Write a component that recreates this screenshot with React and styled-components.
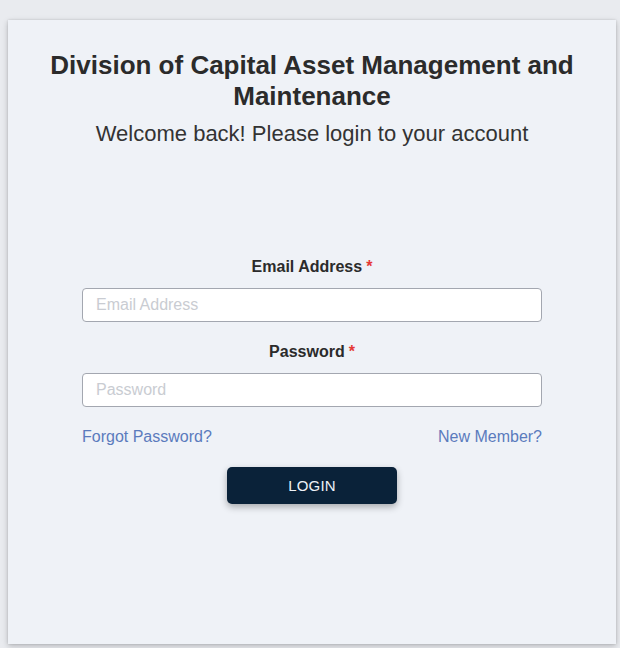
import React from "react";
import styled, { createGlobalStyle } from "styled-components";

const Global = createGlobalStyle`
  html, body { margin: 0; padding: 0; }
  body {
    background: #e9ebef;
    font-family: "Liberation Sans", Arial, sans-serif;
  }
  * { box-sizing: border-box; }
`;

const Page = styled.div`
  padding: 20px 4px 4px 8px;
  min-height: 648px;
`;

const Card = styled.div`
  width: 608px;
  height: 624px;
  background: #eff2f7;
  box-shadow: 0 2px 6px rgba(0, 0, 0, 0.22), 0 0 2px rgba(0, 0, 0, 0.12);
  padding: 30px 20px 0;
  display: flex;
  flex-direction: column;
  align-items: center;
`;

const Title = styled.h1`
  margin: 0;
  font-size: 26px;
  line-height: 31px;
  font-weight: 700;
  color: #2b2b2b;
  text-align: center;
`;

const Subtitle = styled.p`
  margin: 9px 0 0;
  font-size: 22px;
  line-height: 25px;
  color: #333;
  text-align: center;
`;

const Form = styled.form`
  width: 460px;
  margin-top: 112px;
  display: flex;
  flex-direction: column;
  align-items: stretch;
`;

const Label = styled.label`
  display: block;
  text-align: center;
  font-size: 16px;
  line-height: 18px;
  font-weight: 700;
  color: #2b2b2b;
  margin-top: ${(p) => (p.$first ? "0" : "21px")};
  margin-bottom: 12px;
`;

const Required = styled.span`
  color: #e53935;
  margin-left: 4px;
`;

const Input = styled.input`
  width: 100%;
  height: 34px;
  border: 1.5px solid #a3a7b0;
  border-radius: 4px;
  background: #fff;
  padding: 0 13px;
  font-family: "Liberation Sans", Arial, sans-serif;
  font-size: 16px;
  color: #333;
  outline: none;
  &::placeholder { color: #c9ccd2; }
`;

const Links = styled.div`
  display: flex;
  justify-content: space-between;
  margin-top: 21px;
  line-height: 18px;
`;

const LinkText = styled.a`
  font-size: 16px;
  color: #5b7bbd;
  text-decoration: none;
  cursor: pointer;
`;

const Button = styled.button`
  align-self: center;
  margin-top: 21px;
  width: 170px;
  height: 37px;
  border: none;
  border-radius: 5px;
  background: #0a2239;
  color: #eef2f7;
  font-family: "Liberation Sans", Arial, sans-serif;
  font-size: 15px;
  letter-spacing: 0.2px;
  box-shadow: 0 3px 7px rgba(0, 0, 0, 0.3);
  cursor: pointer;
`;

export default function App() {
  return (
    <>
      <Global />
      <Page>
        <Card>
          <Title>Division of Capital Asset Management and Maintenance</Title>
          <Subtitle>Welcome back! Please login to your account</Subtitle>
          <Form onSubmit={(e) => e.preventDefault()}>
            <Label $first htmlFor="email">
              Email Address<Required>*</Required>
            </Label>
            <Input id="email" type="email" placeholder="Email Address" />
            <Label htmlFor="password">
              Password<Required>*</Required>
            </Label>
            <Input id="password" type="password" placeholder="Password" />
            <Links>
              <LinkText>Forgot Password?</LinkText>
              <LinkText>New Member?</LinkText>
            </Links>
            <Button type="submit">LOGIN</Button>
          </Form>
        </Card>
      </Page>
    </>
  );
}
